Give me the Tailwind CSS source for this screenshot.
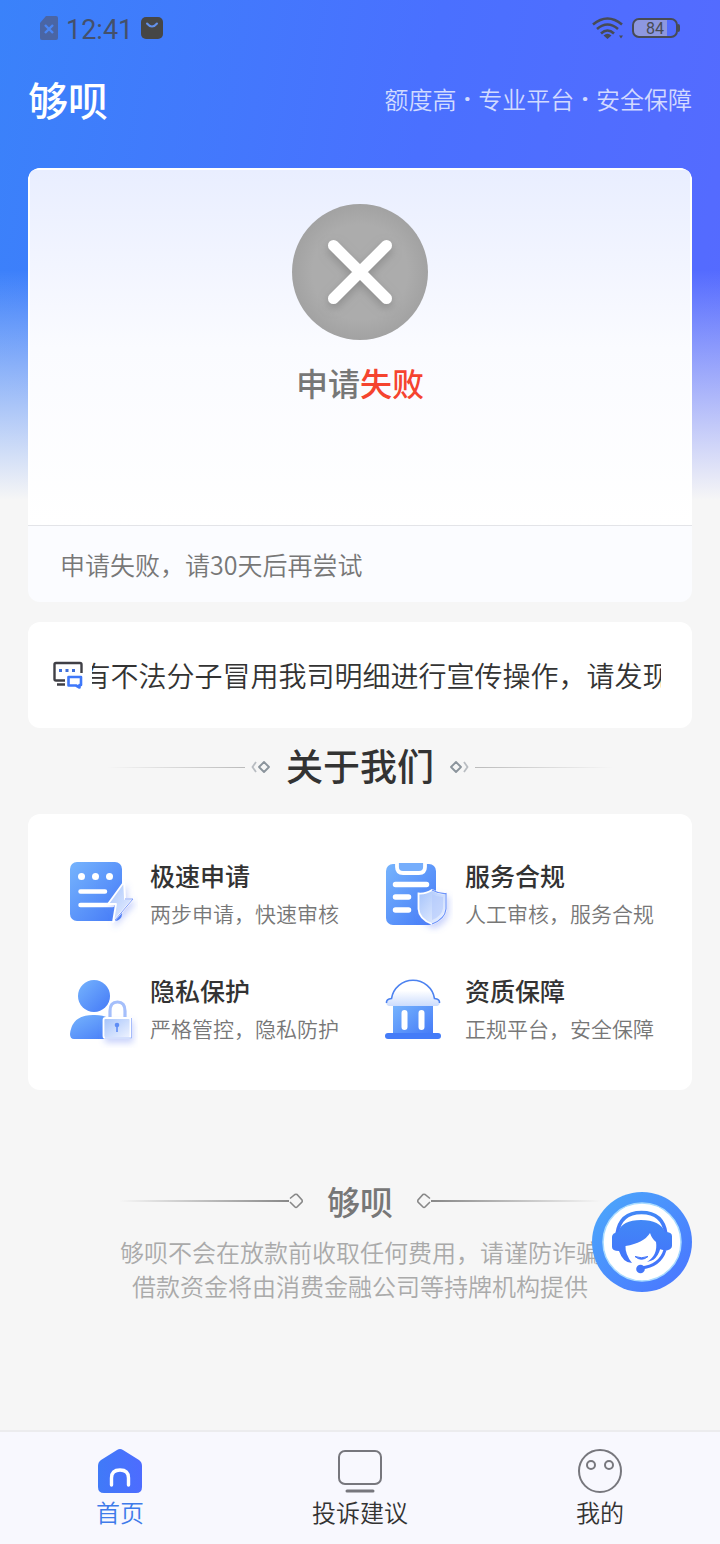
<!DOCTYPE html>
<html lang="zh-CN">

<head>
    <meta charset="UTF-8">
    <meta name="viewport" content="width=device-width, initial-scale=1.0">
    <script src="https://cdn.jsdelivr.net/npm/@tailwindcss/browser@4"></script>
    <title>够呗</title>
</head>

<body class="bg-[#f6f6f6] font-['Noto_Sans_CJK_SC',sans-serif] text-[#333]">

    <div class="min-h-screen flex flex-col bg-[linear-gradient(to_bottom,transparent_54%,#f6f6f6),linear-gradient(100deg,#3a82fa,#4a70ff_55%,#566aff)] bg-[length:100%_500px] bg-no-repeat">

        <!-- Status bar -->
        <div class="h-14 pl-10 pr-10 flex items-center justify-between text-[#474b52]">
            <div class="flex items-center gap-2">
                <svg class="w-[18px] h-6" viewBox="0 0 18 24">
                    <path d="M6 0H16Q18 0 18 2V22Q18 24 16 24H2Q0 24 0 22V7Z" fill="#4a65a4" />
                    <path d="M5 9l8 8M13 9l-8 8" stroke="#4a86f5" stroke-width="2.4" />
                </svg>
                <span class="pt-1 font-[Roboto] text-[27px] leading-8 text-[#44506b]">12:41</span>
                <svg class="w-[22px] h-[22px]" viewBox="0 0 22 22">
                    <rect width="22" height="22" rx="5" fill="#464646" />
                    <path d="M6 6.500q5 6 10 0" fill="none" stroke="#6390ea" stroke-width="2" stroke-linecap="round" />
                </svg>
            </div>
            <div class="flex items-center gap-2">
                <svg class="w-8 h-[22px]" viewBox="0 0 32 22" fill="none" stroke="#474b55" stroke-width="2.600">
                    <path d="M1 7.500Q15.500-4.500 30 7.500M5 12Q15.500 3 26 12M9 16.500Q15.500 10.500 22 16.500" />
                    <path d="M11.500 18.500q4-3.500 8 0L15.500 22ZM27 18.500h4L29 21.500Z" fill="#474b55" stroke="none" />
                </svg>
                <div class="flex items-center">
                    <div class="w-[46px] h-5 rounded-[7px] border-2 border-[#474b55] bg-[linear-gradient(to_right,#8d97e0_78%,transparent_78%)] font-[Roboto] text-base leading-[17px] text-center">84</div>
                    <div class="w-[2px] h-2 rounded-r bg-[#474b55]"></div>
                </div>
            </div>
        </div>

        <header class="h-[86px] px-7 flex items-center justify-between text-white">
            <h1 class="text-[40px] leading-[48px] font-medium">够呗</h1>
            <p class="flex gap-[7px] text-2xl font-[350] text-white/75">
                <span>额度高</span><span class="font-[Roboto] font-black">·</span><span>专业平台</span><span class="font-[Roboto] font-black">·</span><span>安全保障</span>
            </p>
        </header>

        <main class="flex-1 px-7 pt-[26px]">
            <!-- Result -->
            <section class="rounded-xl bg-[#fbfcff] overflow-hidden">
                <div class="rounded-t-xl border-2 border-b-0 border-white">
                    <div class="h-[355px] pt-[34px] flex flex-col items-center bg-linear-to-b from-[#e9eeff] via-[#fafbff] via-50% to-white">
                        <svg class="w-[136px] h-[136px]" viewBox="0 0 136 136">
                            <defs>
                                <radialGradient id="disc">
                                    <stop offset=".7" stop-color="#acacac" />
                                    <stop offset="1" stop-color="#a2a2a2" />
                                </radialGradient>
                                <filter id="crossShadow" x="-30%" y="-30%" width="160%" height="170%">
                                    <feDropShadow dx="0" dy="4" stdDeviation="5" flood-color="#777" flood-opacity=".6" />
                                </filter>
                            </defs>
                            <circle cx="68" cy="68" r="68" fill="url(#disc)" />
                            <path d="M41.500 41.500l53 53M94.500 41.500l-53 53" stroke="#fff" stroke-width="11" stroke-linecap="round" filter="url(#crossShadow)" />
                        </svg>
                        <h2 class="mt-[18px] text-[32px] leading-12 font-medium text-[#777]">申请<span class="text-[#f5442f]">失败</span></h2>
                    </div>
                </div>
                <p class="px-8 pt-5 pb-5 border-t border-[#e3e4e8] text-[25px] leading-9 font-[350] text-[#777]">申请失败，请30天后再尝试</p>
            </section>

            <!-- Notice -->
            <section class="mt-5 h-[106px] pl-6 pr-[31px] flex items-center gap-2 rounded-xl bg-white">
                <svg class="w-8 h-8 shrink-0" viewBox="0 0 32 32" fill="none">
                    <path d="M13 21.500H4Q2.500 21.500 2.500 20V5.500Q2.500 4 4 4H28Q29.500 4 29.500 5.500V14M5 25.500h8" stroke="#3f3f45" stroke-width="2.400" />
                    <path d="M7 11.500h3M13.500 11.500h3M20 11.500h3" stroke="#3f6fd8" stroke-width="2.800" />
                    <path d="M16.500 18H29V26H27.500V28.500L24 26.500H16.500Z" stroke="#3f78fa" stroke-width="2.600" stroke-linejoin="round" />
                </svg>
                <div class="flex-1 min-w-0 flex justify-center overflow-hidden">
                    <p class="shrink-0 whitespace-nowrap text-[28px] leading-10 font-[350] text-[#333]">有不法分子冒用我司明细进行宣传操作，请发现</p>
                </div>
            </section>

            <!-- About -->
            <div class="h-[86px] pb-2 flex items-center justify-center">
                <div class="w-[138px] h-px bg-linear-to-r from-transparent to-[#bbb]"></div>
                <svg class="ml-1.5 w-5 h-3" viewBox="0 0 20 12" fill="none" stroke-width="1.800">
                    <path d="M5 1L1.500 6L5 11" stroke="#b9bdc2" />
                    <path d="M13 1L18 6L13 11L8 6Z" stroke="#8b949c" stroke-linejoin="round" />
                </svg>
                <h2 class="mx-[15px] pb-1 text-[37px] leading-12 font-medium">关于我们</h2>
                <svg class="mr-1.5 w-5 h-3" viewBox="0 0 20 12" fill="none" stroke-width="1.800">
                    <path d="M15 1L18.500 6L15 11" stroke="#b9bdc2" />
                    <path d="M7 1L12 6L7 11L2 6Z" stroke="#8b949c" stroke-linejoin="round" />
                </svg>
                <div class="w-[138px] h-px bg-linear-to-l from-transparent to-[#bbb]"></div>
            </div>

            <section class="pl-10 pr-[38px] pt-10 pb-[41px] grid grid-cols-[auto_auto] justify-between gap-y-[35px] rounded-xl bg-white">
                <div class="flex gap-3">
                    <svg class="w-[70px] h-[76px] mt-1" viewBox="0 0 70 76">
                        <defs>
                            <linearGradient id="blue" x1="0" y1="0" x2="1" y2="1">
                                <stop stop-color="#76b4fd" />
                                <stop offset="1" stop-color="#4479f7" />
                            </linearGradient>
                            <linearGradient id="glass" x1="0" y1="0" x2="1" y2="1">
                                <stop stop-color="#a3c2fb" />
                                <stop offset="1" stop-color="#f0f4ff" />
                            </linearGradient>
                            <filter id="glow" x="-40%" y="-40%" width="190%" height="190%">
                                <feDropShadow dx="2" dy="4" stdDeviation="3" flood-color="#6a86f5" flood-opacity=".35" />
                            </filter>
                        </defs>
                        <rect x="2" y="4" width="52" height="59" rx="7" fill="url(#blue)" />
                        <g fill="#fff">
                            <circle cx="13.500" cy="18.500" r="3.500" />
                            <circle cx="27.500" cy="18.500" r="3.500" />
                            <circle cx="41.500" cy="18.500" r="3.500" />
                        </g>
                        <path d="M12.500 33.500h24.500M12.500 47h32" stroke="#fff" stroke-width="4.500" stroke-linecap="round" />
                        <path d="M56 24L40 46H48L45 64L65 41H57Z" fill="url(#glass)" stroke="#fff" stroke-width="1.800" stroke-linejoin="round" filter="url(#glow)" />
                        <path d="M57 41H65L47 62" fill="none" stroke="#7f9df8" stroke-width="1" />
                    </svg>
                    <div>
                        <h3 class="text-[25px] leading-[42px] font-medium">极速申请</h3>
                        <p class="text-[21px] leading-[34px] font-[350] text-[#777]">两步申请，快速审核</p>
                    </div>
                </div>
                <div class="flex gap-3">
                    <svg class="w-[70px] h-[76px] mt-1" viewBox="0 0 70 76">
                        <rect x="3" y="6" width="50" height="61" rx="7" fill="url(#blue)" />
                        <path d="M14 5V9Q14 15 20 15H36Q42 15 42 9V5" fill="#76aefc" stroke="#fff" stroke-width="3.800" />
                        <path d="M12.500 26.500h31M12.500 39h13M12.500 52h13" stroke="#fff" stroke-width="5.500" stroke-linecap="round" />
                        <path d="M49 32Q56 36 63 35.500V51Q62 61 49 66Q36 61 35.500 51V35.500Q43 36 49 32Z" fill="url(#glass)" stroke="#fff" stroke-width="1.800" filter="url(#glow)" />
                        <path d="M49 32Q56 36 63 35.500V51Q62 61 49 66" fill="none" stroke="#6c93fa" stroke-width="1.200" />
                        <path d="M49 36V62Q59 58 60 50V39Q54 39 49 36Z" fill="#b4c9fb" opacity=".6" />
                    </svg>
                    <div>
                        <h3 class="text-[25px] leading-[42px] font-medium">服务合规</h3>
                        <p class="text-[21px] leading-[34px] font-[350] text-[#777]">人工审核，服务合规</p>
                    </div>
                </div>
                <div class="flex gap-3">
                    <svg class="w-[70px] h-[76px] mt-1" viewBox="0 0 70 76">
                        <circle cx="26" cy="23" r="16" fill="url(#blue)" />
                        <path d="M2 61Q4 42 25 42Q50 41 50 66H6Q2 66 2 61Z" fill="url(#blue)" />
                        <path d="M42 47V38Q42 29 49.500 29T57 38V47" fill="none" stroke="#fff" stroke-width="5.500" />
                        <path d="M42 47V38Q42 29 49.500 29T57 38V47" fill="none" stroke="#a5bffb" stroke-width="3.200" />
                        <rect x="35.500" y="45" width="27" height="20" rx="2" fill="url(#glass)" stroke="#fff" stroke-width="1.800" filter="url(#glow)" />
                        <path d="M63.500 45V65H37" fill="none" stroke="#93aefa" stroke-width=".8" />
                        <circle cx="49" cy="52" r="2.300" fill="#5f8df5" />
                        <path d="M49 52v7" stroke="#5f8df5" stroke-width="1.600" />
                    </svg>
                    <div>
                        <h3 class="text-[25px] leading-[42px] font-medium">隐私保护</h3>
                        <p class="text-[21px] leading-[34px] font-[350] text-[#777]">严格管控，隐私防护</p>
                    </div>
                </div>
                <div class="flex gap-3">
                    <svg class="w-[70px] h-[76px] mt-1" viewBox="0 0 70 76">
                        <defs>
                            <linearGradient id="dome" x1="0" y1="0" x2="0" y2="1">
                                <stop offset=".4" stop-color="#fff" />
                                <stop offset="1" stop-color="#cbdcfd" />
                            </linearGradient>
                        </defs>
                        <rect x="10" y="32" width="40" height="31" fill="url(#blue)" />
                        <rect x="2" y="60" width="56" height="6" rx="3" fill="#447cf8" />
                        <path d="M21.500 40V54M38.500 40V54" stroke="#fff" stroke-width="6" stroke-linecap="round" />
                        <path d="M6 33Q3 32 3 29Q3 26 8.500 25.500A21.800 21.800 0 0 1 51.500 25.500Q57 26 57 29Q57 32 54 33Z" fill="url(#dome)" />
                        <path d="M3.500 30Q3 26 8.500 25.500A21.800 21.800 0 0 1 51.500 25.500Q57 26 56.500 30" fill="none" stroke="#4c82f0" stroke-width="1.600" />
                    </svg>
                    <div>
                        <h3 class="text-[25px] leading-[42px] font-medium">资质保障</h3>
                        <p class="text-[21px] leading-[34px] font-[350] text-[#777]">正规平台，安全保障</p>
                    </div>
                </div>
            </section>
        </main>

        <footer class="pb-[127px] text-center">
            <div class="flex items-center justify-center text-[#777]">
                <div class="w-[170px] h-[2px] bg-linear-to-r from-transparent to-[#888]"></div>
                <svg class="w-[14px] h-4" viewBox="0 0 14 16" fill="none" stroke="#888" stroke-width="1.600">
                    <path d="M1 5.500L6 1.500Q7 1 8 1.500L13 7Q13.500 8 13 9L8 14Q7 15 6 14L1 9" />
                </svg>
                <strong class="mx-6 text-[33px] leading-12 font-medium">够呗</strong>
                <svg class="w-[14px] h-4" viewBox="0 0 14 16" fill="none" stroke="#888" stroke-width="1.600">
                    <path d="M13 5.500L8 1.500Q7 1 6 1.500L1 7Q.5 8 1 9L6 14Q7 15 8 14L13 9" />
                </svg>
                <div class="w-[170px] h-[2px] bg-linear-to-l from-transparent to-[#888]"></div>
            </div>
            <p class="mt-2.5 text-2xl leading-[34px] font-[350] text-[#aaa]">够呗不会在放款前收取任何费用，请谨防诈骗<br>借款资金将由消费金融公司等持牌机构提供</p>
        </footer>

        <!-- Tab bar -->
        <nav class="h-[114px] pt-[17px] grid grid-cols-3 border-t-2 border-[#ececee] bg-[#f8f8fe] text-2xl leading-8 font-[350]">
            <a href="#" class="flex flex-col items-center gap-[3px] text-[#3f7bea]">
                <svg class="w-12 h-11" viewBox="0 0 48 44">
                    <defs>
                        <linearGradient id="home">
                            <stop stop-color="#407af8" />
                            <stop offset="1" stop-color="#4d6cff" />
                        </linearGradient>
                    </defs>
                    <path d="M21 1Q24-1 27 1L43 11Q46 13 46 17V38Q46 44 40 44H8Q2 44 2 38V17Q2 13 5 11Z" fill="url(#home)" />
                    <path d="M15.500 36V29Q15.500 21 24 21T32.500 29V36" fill="none" stroke="#fff" stroke-width="3.400" stroke-linecap="round" />
                </svg>
                首页
            </a>
            <a href="#" class="flex flex-col items-center gap-[3px]">
                <svg class="w-12 h-11" viewBox="0 0 48 44" fill="none" stroke="#77777d" stroke-width="2">
                    <rect x="3" y="2" width="42" height="33" rx="6" />
                    <path d="M11 42h26" stroke-width="3" stroke-linecap="round" />
                </svg>
                投诉建议
            </a>
            <a href="#" class="flex flex-col items-center gap-[3px]">
                <svg class="w-12 h-11" viewBox="0 0 48 44" fill="none" stroke="#77777d" stroke-width="2">
                    <circle cx="24" cy="22" r="21" />
                    <circle cx="15" cy="16" r="4" />
                    <circle cx="33" cy="16" r="4" />
                </svg>
                我的
            </a>
        </nav>
    </div>

    <!-- Customer service -->
    <button type="button" aria-label="客服" class="fixed right-7 bottom-[252px] w-[100px] h-[100px]">
        <svg class="w-full h-full" viewBox="0 0 100 100">
            <defs>
                <linearGradient id="ring" x1="0" y1="0" x2="1" y2="1">
                    <stop offset=".1" stop-color="#4ba4fb" />
                    <stop offset=".9" stop-color="#4a78ff" />
                </linearGradient>
                <linearGradient id="agent" x1="0" y1="0" x2="0" y2="1">
                    <stop stop-color="#4288f6" />
                    <stop offset="1" stop-color="#4374fb" />
                </linearGradient>
            </defs>
            <circle cx="50" cy="50" r="50" fill="url(#ring)" />
            <circle cx="50" cy="50" r="39" fill="#fff" stroke="#a9dbff" stroke-width="1.500" />
            <path d="M25 42Q28 20.500 49.500 20.500T74 42" fill="none" stroke="url(#agent)" stroke-width="3.500" />
            <path d="M26 40Q20 41 20 45V55Q20 59 27 59Q31 71 40 71Q33 62 33.500 54Q52 51 58 41Q60 47 64 50Q66 63 55 70Q68 67 72 59Q80 58 80 54V44Q80 40 73 40Q68 28 49 28T26 40Z" fill="url(#agent)" />
            <path d="M71 58Q67 73 49 76" fill="none" stroke="#fff" stroke-width="6" />
            <path d="M73 58Q68 74 49 76" fill="none" stroke="#4376fa" stroke-width="3" />
            <circle cx="48.500" cy="77" r="4.300" fill="#4376fa" />
            <path d="M43 64.500Q49.500 70 56 64.500Q49.500 67 43 64.500Z" fill="#4376fa" stroke="#4376fa" stroke-width="1" />
        </svg>
    </button>

</body>

</html>
